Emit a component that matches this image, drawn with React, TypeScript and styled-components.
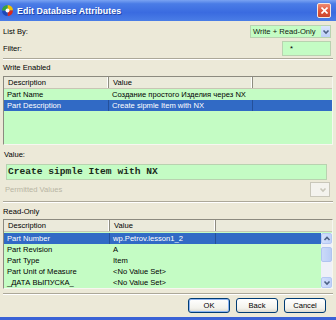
import styled, { createGlobalStyle } from 'styled-components';

const GlobalStyle = createGlobalStyle`
  html, body {
    margin: 0;
    padding: 0;
    background: #ece9d8;
  }
  body {
    font-family: 'Liberation Sans', Arial, sans-serif;
  }
`;

type Row = { desc: string; value: string; selected?: boolean };

const writeRows: Row[] = [
  { desc: 'Part Name', value: 'Создание простого Изделия через NX' },
  { desc: 'Part Description', value: 'Create sipmle Item with NX', selected: true },
];

const readRows: Row[] = [
  { desc: 'Part Number', value: 'wp.Petrov.lesson1_2', selected: true },
  { desc: 'Part Revision', value: 'A' },
  { desc: 'Part Type', value: 'Item' },
  { desc: 'Part Unit of Measure', value: '<No Value Set>' },
  { desc: '_ДАТА ВЫПУСКА_', value: '<No Value Set>' },
];

function Chevron({ dir, color }: { dir: 'up' | 'down'; color: string }) {
  const d = dir === 'down' ? 'M1.5 2.5 L4 5 L6.5 2.5' : 'M1.5 5 L4 2.5 L6.5 5';
  return (
    <svg width='8' height='8' viewBox='0 0 8 8'>
      <path d={d} fill='none' stroke={color} strokeWidth='1.6' />
    </svg>
  );
}

function App() {
  return (
    <Window>
      <GlobalStyle />
      <TitleBar>
        <svg width='13' height='13' viewBox='0 0 13 13'>
          <path d='M6.5 1 A5.5 5.5 0 0 1 12 6.5 L6.5 6.5 Z' fill='#f2c200' />
          <path d='M12 6.5 A5.5 5.5 0 0 1 6.5 12 L6.5 6.5 Z' fill='#d8281c' />
          <path d='M6.5 12 A5.5 5.5 0 0 1 1 6.5 L6.5 6.5 Z' fill='#1c49b8' />
          <path d='M1 6.5 A5.5 5.5 0 0 1 6.5 1 L6.5 6.5 Z' fill='#3aa23a' />
          <circle cx='6.5' cy='6.5' r='2' fill='#ffffff' />
        </svg>
        <TitleText>Edit Database Attributes</TitleText>
        <CloseButton>
          <svg width='7' height='7' viewBox='0 0 7 7'>
            <path d='M0.5 0.5 L6.5 6.5 M6.5 0.5 L0.5 6.5' stroke='#fff' strokeWidth='1.6' />
          </svg>
        </CloseButton>
      </TitleBar>

      <Body>
        <FieldRow $h={13} $mt={0}>
          <Label>List By:</Label>
          <Select>
            <span>Write + Read-Only</span>
            <DropButton>
              <Chevron dir='down' color='#4d6185' />
            </DropButton>
          </Select>
        </FieldRow>
        <FieldRow $h={15} $mt={3}>
          <Label>Filter:</Label>
          <FilterInput>*</FilterInput>
        </FieldRow>

        <Separator $mt={2} />
        <SectionLabel $mt={2}>Write Enabled</SectionLabel>

        <ListView $h={69} $mt={2}>
          <HeaderRow $cols='105px 144px 1fr'>
            <HeaderCell>Description</HeaderCell>
            <HeaderCell>Value</HeaderCell>
            <HeaderCell />
          </HeaderRow>
          <Rows>
            {writeRows.map((r) => (
              <DataRow key={r.desc} $cols='105px 144px 1fr' $h={11} $selected={r.selected}>
                <Cell>{r.desc}</Cell>
                <Cell>{r.value}</Cell>
                <Cell />
              </DataRow>
            ))}
          </Rows>
        </ListView>

        <SectionLabel $mt={4} $indent={1}>Value:</SectionLabel>
        <ValueBox>Create sipmle Item with NX</ValueBox>
        <FieldRow $h={15} $mt={2}>
          <DisabledLabel>Permitted Values</DisabledLabel>
          <DisabledCombo>
            <Chevron dir='down' color='#c9c7ba' />
          </DisabledCombo>
        </FieldRow>

        <Separator $mt={4} />
        <SectionLabel $mt={3}>Read-Only</SectionLabel>

        <ListView $h={70} $mt={1}>
          <HeaderRow $cols='106px 106px 1fr'>
            <HeaderCell>Description</HeaderCell>
            <HeaderCell>Value</HeaderCell>
            <HeaderCell />
          </HeaderRow>
          <ScrollArea>
            <Rows>
              {readRows.map((r) => (
                <DataRow key={r.desc} $cols='106px 106px 1fr' $h={11} $selected={r.selected}>
                  <Cell>{r.desc}</Cell>
                  <Cell>{r.value}</Cell>
                  <Cell />
                </DataRow>
              ))}
            </Rows>
            <ScrollBar>
              <ScrollButton>
                <Chevron dir='up' color='#4d6185' />
              </ScrollButton>
              <Track>
                <Thumb />
              </Track>
              <ScrollButton>
                <Chevron dir='down' color='#4d6185' />
              </ScrollButton>
            </ScrollBar>
          </ScrollArea>
        </ListView>

        <Separator $mt={4} />
        <ButtonBar>
          <Button $default>OK</Button>
          <Button>Back</Button>
          <Button>Cancel</Button>
        </ButtonBar>
      </Body>
      <BottomFrame />
    </Window>
  );
}

const Window = styled.div`
  width: 336px;
  height: 320px;
  display: flex;
  flex-direction: column;
  background: #ece9d8;
  overflow: hidden;
  font-size: 7.6px;
  color: #000;
`;

const TitleBar = styled.div`
  height: 21px;
  flex: none;
  display: flex;
  align-items: center;
  gap: 3px;
  padding: 0 5px 0 1px;
  background: linear-gradient(180deg, #7aa3f2 0%, #4a7ce6 18%, #3a6be0 60%, #4a7de6 100%);
`;

const TitleText = styled.span`
  color: #fff;
  font-weight: bold;
  font-size: 8.8px;
  letter-spacing: 0.1px;
  text-shadow: 1px 1px 0 #1d44a8;
`;

const CloseButton = styled.div`
  margin-left: auto;
  width: 12px;
  height: 13px;
  display: flex;
  align-items: center;
  justify-content: center;
  border: 1px solid #f4e6e0;
  border-radius: 2px;
  background: linear-gradient(180deg, #ef8a70 0%, #e0553a 55%, #c9442c 100%);
`;

const Body = styled.div`
  flex: 1;
  display: flex;
  flex-direction: column;
  padding: 4px 3px 0 3px;
`;

const FieldRow = styled.div<{ $h: number; $mt: number }>`
  height: ${(p) => p.$h}px;
  margin-top: ${(p) => p.$mt}px;
  display: flex;
  align-items: center;
  justify-content: space-between;
`;

const Label = styled.span`
  padding-left: 0;
`;

const DisabledLabel = styled.span`
  color: #b8b5a4;
  padding-left: 2px;
`;

const Select = styled.div`
  width: 81px;
  height: 13px;
  box-sizing: border-box;
  margin-right: 2px;
  display: flex;
  align-items: center;
  justify-content: space-between;
  background: #c4fcc4;
  border: 1px solid #b9d2b0;
  padding-left: 2px;
  span {
    color: #102010;
  }
`;

const DropButton = styled.div`
  width: 9px;
  height: 11px;
  display: flex;
  align-items: center;
  justify-content: center;
  background: linear-gradient(180deg, #dbe6fd 0%, #bccff8 100%);
`;

const FilterInput = styled.div`
  width: 49px;
  height: 15px;
  box-sizing: border-box;
  margin-right: 2px;
  background: #c4fcc4;
  border: 1px solid #b9d2b0;
  padding: 2px 0 0 7px;
  font-size: 7.6px;
`;

const Separator = styled.div<{ $mt: number }>`
  margin-top: ${(p) => p.$mt}px;
  height: 0;
  border-top: 1px solid #aca899;
  border-bottom: 1px solid #fff;
  flex: none;
`;

const SectionLabel = styled.div<{ $mt: number; $indent?: number }>`
  margin-top: ${(p) => p.$mt}px;
  height: 12px;
  line-height: 12px;
  padding-left: ${(p) => p.$indent ?? 0}px;
`;

const ListView = styled.div<{ $h: number; $mt: number }>`
  height: ${(p) => p.$h}px;
  margin-top: ${(p) => p.$mt}px;
  flex: none;
  display: flex;
  flex-direction: column;
  box-sizing: border-box;
  border: 1px solid;
  border-color: #8c8a7f #f7f6f0 #f7f6f0 #8c8a7f;
  background: #c4fcc4;
  overflow: hidden;
`;

const HeaderRow = styled.div<{ $cols: string }>`
  height: 12px;
  flex: none;
  display: grid;
  grid-template-columns: ${(p) => p.$cols};
  background: #ebeadb;
  border-bottom: 1px solid #c8c5b4;
  box-sizing: border-box;
`;

const HeaderCell = styled.div`
  padding-left: 4px;
  line-height: 11px;
  border-right: 1px solid #8e8c80;
  box-shadow: inset -1px 0 0 #fff;
  &:last-child {
    border-right: none;
    box-shadow: none;
  }
`;

const Rows = styled.div`
  flex: 1;
  display: flex;
  flex-direction: column;
`;

const DataRow = styled.div<{ $cols: string; $h: number; $selected?: boolean }>`
  height: ${(p) => p.$h}px;
  flex: none;
  display: grid;
  grid-template-columns: ${(p) => p.$cols};
  background: ${(p) => (p.$selected ? '#316ac5' : 'transparent')};
  color: ${(p) => (p.$selected ? '#fff' : '#000')};
  & > div {
    border-right: 1px solid ${(p) => (p.$selected ? '#24509a' : 'transparent')};
  }
  & > div:last-child {
    border-right: none;
  }
`;

const Cell = styled.div`
  padding-left: 3px;
  line-height: 10px;
  padding-top: 0.5px;
  white-space: nowrap;
  overflow: hidden;
`;

const ValueBox = styled.div`
  margin: 3px 6px 0 3px;
  height: 16px;
  box-sizing: border-box;
  background: #c4fcc4;
  border: 1px solid #b9d2b0;
  padding-left: 1px;
  font-family: 'Liberation Mono', 'Courier New', monospace;
  font-weight: bold;
  font-size: 9.6px;
  line-height: 14px;
  color: #1a2a1a;
`;

const DisabledCombo = styled.div`
  width: 20px;
  height: 15px;
  margin-right: 3px;
  box-sizing: border-box;
  display: flex;
  align-items: center;
  justify-content: flex-end;
  padding-right: 2px;
  background: #f4f3ee;
  border: 1px solid #c9c7ba;
`;

const ScrollArea = styled.div`
  flex: 1;
  display: flex;
  padding-top: 1px;
`;

const ScrollBar = styled.div`
  width: 11px;
  flex: none;
  display: flex;
  flex-direction: column;
  background: #eef0f8;
`;

const ScrollButton = styled.div`
  height: 11px;
  display: flex;
  align-items: center;
  justify-content: center;
  background: linear-gradient(90deg, #d4e0fb 0%, #c1d3fa 100%);
  border: 1px solid #b5c8f4;
  box-sizing: border-box;
  border-radius: 2px;
`;

const Track = styled.div`
  flex: 1;
  padding-top: 3px;
`;

const Thumb = styled.div`
  height: 15px;
  background: linear-gradient(90deg, #cbdaf9 0%, #b9cdf6 100%);
  border: 1px solid #b0c4f0;
  box-sizing: border-box;
  border-radius: 2px;
`;

const ButtonBar = styled.div`
  margin-top: 3px;
  display: flex;
  justify-content: flex-end;
  gap: 6px;
  padding-right: 7px;
`;

const Button = styled.div<{ $default?: boolean }>`
  width: 42px;
  height: 15px;
  box-sizing: border-box;
  display: flex;
  align-items: center;
  justify-content: center;
  border: 1px solid #003c74;
  border-radius: 3px;
  background: linear-gradient(180deg, #ffffff 0%, #f3f2ec 70%, #dcdacf 100%);
  box-shadow: ${(p) => (p.$default ? 'inset 0 0 0 1px #8cb4f2' : 'none')};
`;

const BottomFrame = styled.div`
  height: 3px;
  flex: none;
  background: #3a62d6;
`;

export default App;
